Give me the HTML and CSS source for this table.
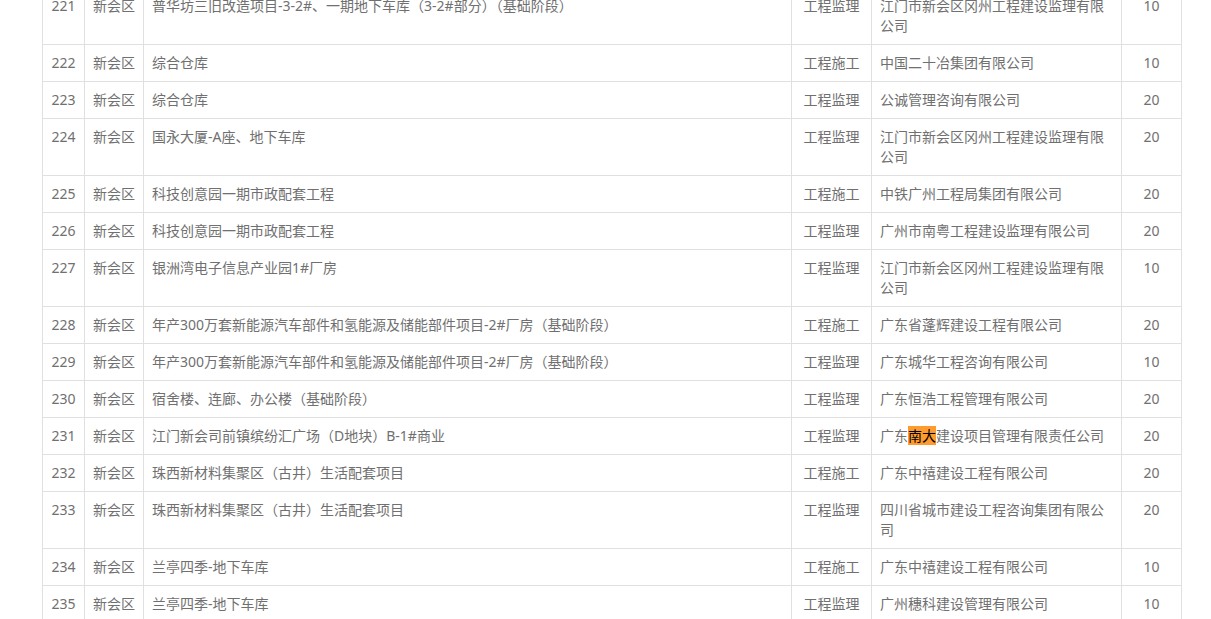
FILE: index.html
```html
<!DOCTYPE html>
<html lang="zh-CN">
<head>
<meta charset="utf-8">
<title>名单</title>
<link rel="stylesheet" href="styles.css">
</head>
<body>
<div class="wrap">
<table class="list">
<colgroup>
<col class="c-no"><col class="c-area"><col class="c-proj"><col class="c-type"><col class="c-comp"><col class="c-score">
</colgroup>
<tbody>
<tr><td class="ctr">221</td><td>新会区</td><td>普华坊三旧改造项目-3-2#、一期地下车库（3-2#部分）（基础阶段）</td><td class="ctr">工程监理</td><td>江门市新会区冈州工程建设监理有限公司</td><td class="ctr">10</td></tr>
<tr><td class="ctr">222</td><td>新会区</td><td>综合仓库</td><td class="ctr">工程施工</td><td>中国二十冶集团有限公司</td><td class="ctr">10</td></tr>
<tr><td class="ctr">223</td><td>新会区</td><td>综合仓库</td><td class="ctr">工程监理</td><td>公诚管理咨询有限公司</td><td class="ctr">20</td></tr>
<tr><td class="ctr">224</td><td>新会区</td><td>国永大厦-A座、地下车库</td><td class="ctr">工程监理</td><td>江门市新会区冈州工程建设监理有限公司</td><td class="ctr">20</td></tr>
<tr><td class="ctr">225</td><td>新会区</td><td>科技创意园一期市政配套工程</td><td class="ctr">工程施工</td><td>中铁广州工程局集团有限公司</td><td class="ctr">20</td></tr>
<tr><td class="ctr">226</td><td>新会区</td><td>科技创意园一期市政配套工程</td><td class="ctr">工程监理</td><td>广州市南粤工程建设监理有限公司</td><td class="ctr">20</td></tr>
<tr><td class="ctr">227</td><td>新会区</td><td>银洲湾电子信息产业园1#厂房</td><td class="ctr">工程监理</td><td>江门市新会区冈州工程建设监理有限公司</td><td class="ctr">10</td></tr>
<tr><td class="ctr">228</td><td>新会区</td><td>年产300万套新能源汽车部件和氢能源及储能部件项目-2#厂房（基础阶段）</td><td class="ctr">工程施工</td><td>广东省蓬辉建设工程有限公司</td><td class="ctr">20</td></tr>
<tr><td class="ctr">229</td><td>新会区</td><td>年产300万套新能源汽车部件和氢能源及储能部件项目-2#厂房（基础阶段）</td><td class="ctr">工程监理</td><td>广东城华工程咨询有限公司</td><td class="ctr">10</td></tr>
<tr><td class="ctr">230</td><td>新会区</td><td>宿舍楼、连廊、办公楼（基础阶段）</td><td class="ctr">工程监理</td><td>广东恒浩工程管理有限公司</td><td class="ctr">20</td></tr>
<tr><td class="ctr">231</td><td>新会区</td><td>江门新会司前镇缤纷汇广场（D地块）B-1#商业</td><td class="ctr">工程监理</td><td>广东<mark class="hl">南大</mark>建设项目管理有限责任公司</td><td class="ctr">20</td></tr>
<tr><td class="ctr">232</td><td>新会区</td><td>珠西新材料集聚区（古井）生活配套项目</td><td class="ctr">工程施工</td><td>广东中禧建设工程有限公司</td><td class="ctr">20</td></tr>
<tr><td class="ctr">233</td><td>新会区</td><td>珠西新材料集聚区（古井）生活配套项目</td><td class="ctr">工程监理</td><td>四川省城市建设工程咨询集团有限公司</td><td class="ctr">20</td></tr>
<tr><td class="ctr">234</td><td>新会区</td><td>兰亭四季-地下车库</td><td class="ctr">工程施工</td><td>广东中禧建设工程有限公司</td><td class="ctr">10</td></tr>
<tr><td class="ctr">235</td><td>新会区</td><td>兰亭四季-地下车库</td><td class="ctr">工程监理</td><td>广州穗科建设管理有限公司</td><td class="ctr">10</td></tr>
</tbody>
</table>
</div>
</body>
</html>
```
FILE: styles.css
```css
html, body {
  margin: 0;
  padding: 0;
  background: #fff;
}
body {
  font-family: "Noto Sans", "Noto Sans CJK SC", sans-serif;
  font-size: 14px;
  line-height: 20px;
  color: #707070;
  overflow: hidden;
}
.wrap {
  margin: -13px 0 0 42px;
}
.list {
  border-collapse: collapse;
  table-layout: fixed;
  width: 1140px;
}
.c-no { width: 42px; }
.c-area { width: 59px; }
.c-proj { width: 648px; }
.c-type { width: 80px; }
.c-comp { width: 250px; }
.c-score { width: 60px; }
.list td {
  border: 1px solid #e0e0e0;
  padding: 8px 8px;
  vertical-align: top;
  text-align: left;
}
.list td.ctr {
  text-align: center;
  padding-left: 2px;
  padding-right: 2px;
}
.hl {
  background: #ff9a2e;
  color: #000;
}
```
